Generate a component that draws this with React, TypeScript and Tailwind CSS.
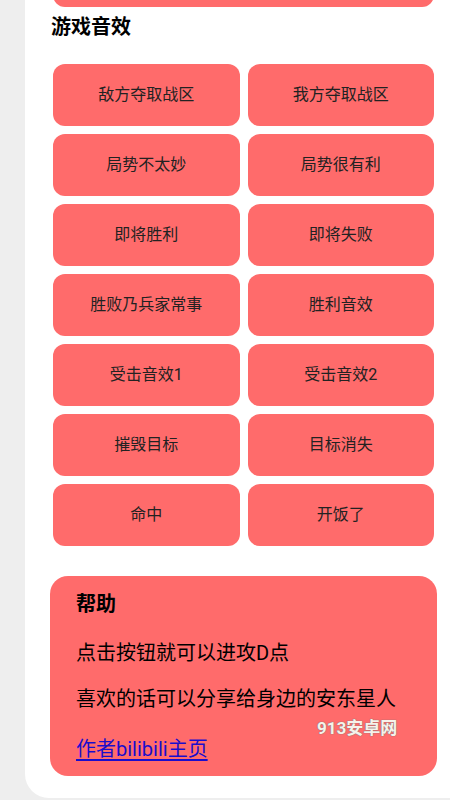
const sounds = [
  '敌方夺取战区',
  '我方夺取战区',
  '局势不太妙',
  '局势很有利',
  '即将胜利',
  '即将失败',
  '胜败乃兵家常事',
  '胜利音效',
  '受击音效1',
  '受击音效2',
  '摧毁目标',
  '目标消失',
  '命中',
  '开饭了',
]

export default function App() {
  return (
    <div className="h-[800px] overflow-hidden bg-[#eeeeee] font-['Roboto','Noto_Sans_CJK_SC',sans-serif]">
      <div className="ml-[25px] h-[798px] flex flex-col bg-white rounded-bl-[24px] pl-[25px] pr-[13px]">
        {/* 上一个按钮（只露出底部） */}
        <div className="-mt-[55px] mx-[3px] h-[62px] shrink-0 rounded-[12px] bg-[#ff6b6b]" />

        <h2 className="mt-[6px] ml-[1px] text-[20px] leading-[28px] font-bold text-black">游戏音效</h2>

        <div className="mt-[23px] mx-[3px] grid grid-cols-2 gap-[8px]">
          {sounds.map((name) => (
            <button
              key={name}
              className="h-[62px] rounded-[12px] bg-[#ff6b6b] text-[16px] text-[#222] flex items-center justify-center"
            >
              {name}
            </button>
          ))}
        </div>

        {/* 帮助 */}
        <div className="relative mt-[30px] w-[387px] shrink-0 rounded-[18px] bg-[#ff6b6b] px-[26px] pt-[14px] pb-[13px] text-[20px] leading-[28px] text-black">
          <p className="font-bold">帮助</p>
          <p className="mt-[21px]">点击按钮就可以进攻D点</p>
          <p className="mt-[18px]">喜欢的话可以分享给身边的安东星人</p>
          <a href="#" className="block mt-[22px] text-[#1a0dcc] underline underline-offset-[3px]">
            作者bilibili主页
          </a>
          <span className="absolute left-[267px] top-[138px] text-[17px] font-bold text-[#f7f2ea] [text-shadow:0_0_1px_#777,0_0_1px_#777]">
            913安卓网
          </span>
        </div>
      </div>
    </div>
  )
}
